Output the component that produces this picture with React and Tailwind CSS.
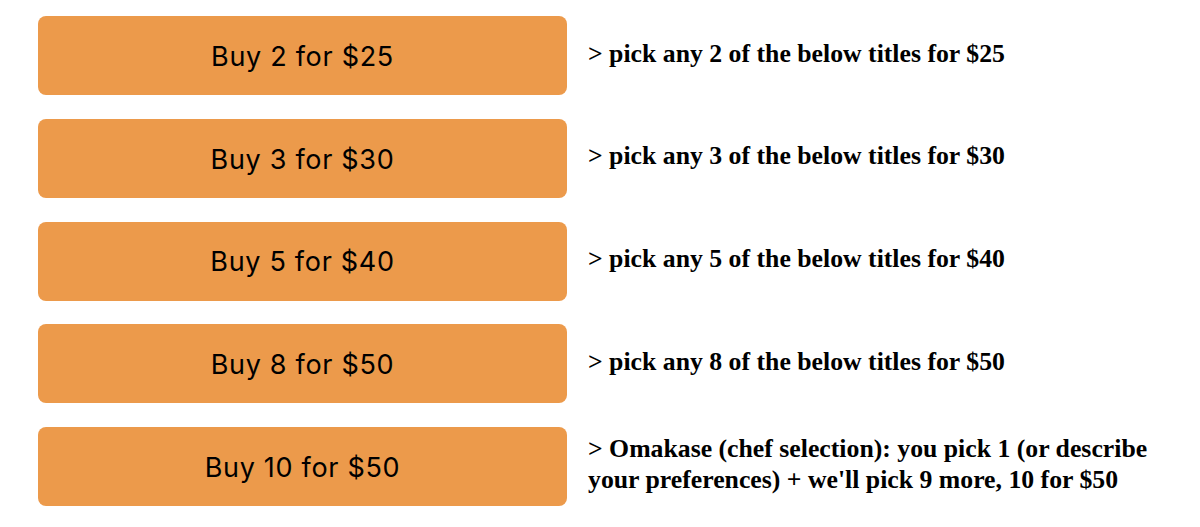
export default function App() {
  const rows = [
    ["Buy 2 for $25", "> pick any 2 of the below titles for $25"],
    ["Buy 3 for $30", "> pick any 3 of the below titles for $30"],
    ["Buy 5 for $40", "> pick any 5 of the below titles for $40"],
    ["Buy 8 for $50", "> pick any 8 of the below titles for $50"],
    [
      "Buy 10 for $50",
      "> Omakase (chef selection): you pick 1 (or describe your preferences) + we'll pick 9 more, 10 for $50",
    ],
  ];
  return (
    <div className="w-[1200px] h-[527px] bg-white pt-[16px] pl-[38px] flex flex-col gap-[23.75px]">
      {rows.map(([btn, desc], i) => (
        <div key={i} className="flex items-center gap-[21px]">
          <div className="w-[529px] h-[79px] shrink-0 rounded-[8px] bg-[#ec9a4b] flex items-center justify-center pt-[3px] text-[27px] tracking-[0.7px] text-black font-['Inter','Liberation_Sans',sans-serif]">
            {btn}
          </div>
          <div className="w-[570px] pb-[5px] font-['Liberation_Serif',serif] font-bold text-[25.75px] leading-[31px] text-black">
            {desc}
          </div>
        </div>
      ))}
    </div>
  );
}
